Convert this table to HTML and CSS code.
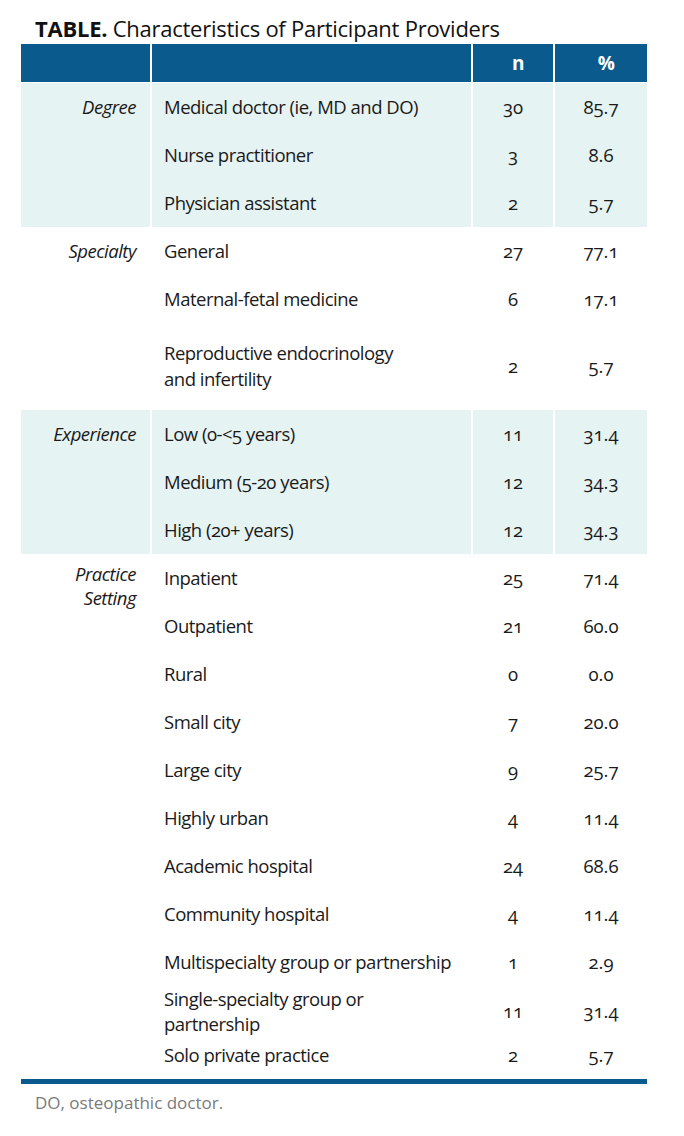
FILE: index.html
```html
<!DOCTYPE html>
<html lang="en">
<head>
<meta charset="utf-8">
<title>Characteristics of Participant Providers</title>
<link rel="stylesheet" href="styles.css">
</head>
<body>
<div class="page">
  <h1 class="title"><b>TABLE.</b> Characteristics of Participant Providers</h1>
  <table class="data">
    <colgroup>
      <col class="c-group">
      <col class="c-desc">
      <col class="c-n">
      <col class="c-pct">
    </colgroup>
    <thead>
      <tr><th></th><th></th><th class="hn">n</th><th class="hn">%</th></tr>
    </thead>
    <tbody class="band">
      <tr><th class="group" rowspan="3">Degree</th><td class="desc">Medical doctor (ie, MD and DO)</td><td class="num">30</td><td class="num">85.7</td></tr>
      <tr><td class="desc">Nurse practitioner</td><td class="num">3</td><td class="num">8.6</td></tr>
      <tr><td class="desc">Physician assistant</td><td class="num">2</td><td class="num">5.7</td></tr>
    </tbody>
    <tbody>
      <tr><th class="group" rowspan="3">Specialty</th><td class="desc">General</td><td class="num">27</td><td class="num">77.1</td></tr>
      <tr><td class="desc">Maternal-fetal medicine</td><td class="num">6</td><td class="num">17.1</td></tr>
      <tr class="tall"><td class="desc">Reproductive endocrinology<br>and infertility</td><td class="num">2</td><td class="num">5.7</td></tr>
    </tbody>
    <tbody class="band">
      <tr><th class="group" rowspan="3">Experience</th><td class="desc">Low (0-&lt;5 years)</td><td class="num">11</td><td class="num">31.4</td></tr>
      <tr><td class="desc">Medium (5-20 years)</td><td class="num">12</td><td class="num">34.3</td></tr>
      <tr><td class="desc">High (20+ years)</td><td class="num">12</td><td class="num">34.3</td></tr>
    </tbody>
    <tbody>
      <tr><th class="group two" rowspan="11">Practice<br>Setting</th><td class="desc">Inpatient</td><td class="num">25</td><td class="num">71.4</td></tr>
      <tr><td class="desc">Outpatient</td><td class="num">21</td><td class="num">60.0</td></tr>
      <tr><td class="desc">Rural</td><td class="num">0</td><td class="num">0.0</td></tr>
      <tr><td class="desc">Small city</td><td class="num">7</td><td class="num">20.0</td></tr>
      <tr><td class="desc">Large city</td><td class="num">9</td><td class="num">25.7</td></tr>
      <tr><td class="desc">Highly urban</td><td class="num">4</td><td class="num">11.4</td></tr>
      <tr><td class="desc">Academic hospital</td><td class="num">24</td><td class="num">68.6</td></tr>
      <tr><td class="desc">Community hospital</td><td class="num">4</td><td class="num">11.4</td></tr>
      <tr><td class="desc nowrap">Multispecialty group or partnership</td><td class="num">1</td><td class="num">2.9</td></tr>
      <tr class="tight"><td class="desc">Single-specialty group or<br>partnership</td><td class="num">11</td><td class="num">31.4</td></tr>
      <tr class="last"><td class="desc">Solo private practice</td><td class="num">2</td><td class="num">5.7</td></tr>
    </tbody>
  </table>
  <p class="note">DO, osteopathic doctor.</p>
</div>
</body>
</html>
```

FILE: styles.css
```css
* { box-sizing: border-box; }

html, body {
  margin: 0;
  padding: 0;
  background: #ffffff;
}

.page {
  font-family: "Open Sans", "Noto Sans", "Liberation Sans", sans-serif;
  font-stretch: normal;
  color: #1a1a1a;
  padding-top: 13px;
}

.title {
  margin: 0;
  padding-left: 35px;
  font-size: 22px;
  letter-spacing: -0.25px;
  line-height: 31px;
  font-weight: 400;
  color: #111;
  height: 31px;
}

.title b {
  font-weight: 700;
}

.data {
  margin-left: 21px;
  width: 626px;
  border-collapse: collapse;
  table-layout: fixed;
  font-size: 18.5px;
  letter-spacing: -0.5px;
  font-variant-numeric: oldstyle-nums;
  border-bottom: 5px solid #0b5a8e;
}

.c-group { width: 130px; }
.c-desc { width: 321px; }
.c-n { width: 82px; }
.c-pct { width: 93px; }

thead th {
  background: #0b5a8e;
  color: #ffffff;
  height: 38px;
  padding: 0;
  font-weight: 700;
  font-size: 19px;
  text-align: center;
  border-left: 2px solid #ffffff;
  border-bottom: 1px solid #ffffff;
}

thead th:first-child { border-left: none; }

.hn { padding-left: 10px; }

td, .group {
  padding-top: 11px;
  padding-bottom: 11px;
  line-height: 26px;
  vertical-align: middle;
  border-left: 2px solid #ffffff;
}

.band td, .band .group {
  background: #e6f3f3;
}

.group {
  font-weight: 400;
  font-style: italic;
  text-align: right;
  padding-left: 0;
  padding-right: 14px;
  vertical-align: top;
  border-left: none;
}

.group.two {
  line-height: 24px;
  padding-top: 8px;
}

.desc {
  padding-left: 12px;
  padding-right: 0;
}

.nowrap { white-space: nowrap; }

.num {
  text-align: center;
  padding-left: 0;
  padding-right: 0;
  letter-spacing: 0;
}

.tall td {
  padding-top: 17px;
  padding-bottom: 18px;
}

.tight td {
  padding-top: 0;
  padding-bottom: 0;
  line-height: 25px;
  height: 47px;
}

.last td {
  padding-top: 6px;
  padding-bottom: 11px;
}

.note {
  margin: 8px 0 0 35px;
  font-size: 17px;
  line-height: 22px;
  color: #7a7a7a;
}
```
